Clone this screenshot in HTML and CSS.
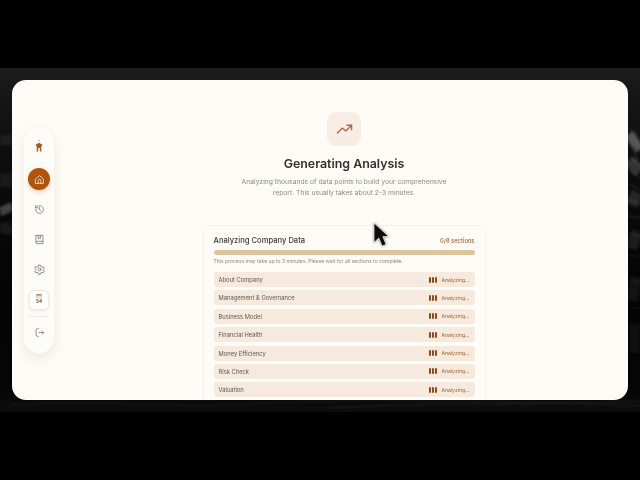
FILE: index.html
```html
<!DOCTYPE html>
<html lang="en">
<head>
<meta charset="utf-8">
<title>Generating Analysis</title>
<link rel="stylesheet" href="styles.css">
</head>
<body>
<div class="band">
  <svg class="texture" viewBox="0 0 640 344" preserveAspectRatio="none" aria-hidden="true">
    <defs>
      <filter id="soft"><feGaussianBlur stdDeviation="1"/></filter>
      <filter id="softer"><feGaussianBlur stdDeviation="1.800"/></filter>
    </defs>
    <g filter="url(#softer)" fill="none" stroke="#9a9a9a">
      <path d="M0 144 L12 138" stroke-width="8" opacity=".38"/>
      <path d="M0 72 L12 72" stroke-width="10" opacity=".1"/>
      <path d="M0 112 L12 112" stroke-width="14" opacity=".1"/>
      <path d="M0 160 L12 162" stroke-width="10" opacity=".12"/>
      <path d="M629 66 L640 82" stroke-width="9" opacity=".5"/>
      <path d="M629 92 L640 104" stroke-width="12" opacity=".28"/>
      <path d="M629 128 L640 134" stroke-width="14" opacity=".2"/>
      <path d="M629 170 L640 174" stroke-width="18" opacity=".14"/>
      <path d="M629 220 L640 222" stroke-width="24" opacity=".1"/>
      <path d="M629 270 L640 270" stroke-width="30" opacity=".07"/>
    </g>
    <g filter="url(#soft)" fill="none" stroke="#c4c4c4" stroke-width=".8" opacity=".3">
      <path d="M630 60 L639 78"/><path d="M634 62 L640 74"/><path d="M629 72 L638 92"/>
      <path d="M629 88 L640 98"/><path d="M629 102 L640 110"/><path d="M629 116 L640 122"/>
      <path d="M629 132 L640 136"/><path d="M629 148 L640 150"/><path d="M629 166 L640 168" opacity=".7"/>
      <path d="M629 188 L640 188" opacity=".6"/><path d="M629 212 L640 214" opacity=".5"/>
      <path d="M629 240 L640 240" opacity=".4"/><path d="M629 264 L640 266" opacity=".3"/>
      <path d="M0 140 L12 136"/><path d="M0 147 L12 143"/><path d="M2 156 L10 154" opacity=".6"/>
    </g>
    <g filter="url(#soft)" fill="none" stroke="#2e2e2e" stroke-width="1">
      <path d="M10 337 C100 332 170 340 250 336 S420 330 640 338" opacity=".5"/>
      <path d="M330 340 C420 334 520 338 640 333" opacity=".7"/>
    </g>
  </svg>
  <main class="window">
    <nav class="rail">
      <svg class="logo" viewBox="0 0 12 16" aria-hidden="true"><circle cx="6" cy="1.600" r="1" fill="#d9b79a"/><path d="M2 6.500 6 4l4 2.500-.8 2h-.7l.5 6H7v-4H5v4H3l.5-6h-.7z" fill="#a65a24"/></svg>
      <a class="rail-btn active">
        <svg viewBox="0 0 24 24"><path d="M3.500 11 12 3.500l8.500 7.500v9.500h-17z"/><path d="M9 20.500v-6a3 3 0 0 1 6 0v6"/></svg>
      </a>
      <a class="rail-btn">
        <svg viewBox="0 0 24 24"><path d="M3.500 12a8.500 8.500 0 1 0 2.800-6.300L3.500 8.500"/><path d="M3.500 3.500v5H8.500"/><path d="M12 7.500V12.500l3.500 2"/></svg>
      </a>
      <a class="rail-btn">
        <svg viewBox="0 0 24 24"><path d="M4.500 3h15v18H7a2.500 2.500 0 0 1-2.500-2.500z"/><path d="M4.500 18.500A2.500 2.500 0 0 1 7 16h12.500"/><path d="M9 3v7l2.500-1.500L14 10V3"/></svg>
      </a>
      <a class="rail-btn">
        <svg viewBox="0 0 24 24"><path d="M10 2.500h4l.7 3 2.700 1.500 2.900-.9 2 3.400-2.200 2.100v1.800l2.200 2.100-2 3.400-2.900-.9-2.700 1.500-.7 3h-4l-.7-3-2.700-1.500-2.900.9-2-3.400 2.200-2.100v-1.800L1.700 9.500l2-3.400 2.900.9L9.300 5.500z"/><circle cx="12" cy="12" r="3"/></svg>
      </a>
      <div class="credits">
        <svg viewBox="0 0 12 9" aria-hidden="true"><rect x=".5" y=".5" width="11" height="8" rx="1" fill="#f6e6d4" stroke="#c09066"/><rect x=".5" y=".5" width="11" height="3" fill="#b4794a"/></svg>
        <span>54</span>
      </div>
      <div class="rail-rule"></div>
      <a class="rail-btn">
        <svg viewBox="0 0 24 24"><path d="M9.500 3.500H8a3.500 3.500 0 0 0-3.500 3.500v10A3.500 3.500 0 0 0 8 20.500h1.500"/><path d="M11 12h10"/><path d="M17.500 8.500 21 12l-3.500 3.500"/></svg>
      </a>
    </nav>
    <section class="main">
      <div class="hero-icon">
        <svg viewBox="0 0 24 24"><path d="M2 17l7-7 5 4 8-8"/><path d="M15.500 6H22v6.500"/></svg>
      </div>
      <h1>Generating Analysis</h1>
      <p class="lead">Analyzing thousands of data points to build your comprehensive<br>report. This usually takes about 2-3 minutes.</p>
      <div class="card">
        <div class="card-head">
          <h2>Analyzing Company Data</h2>
          <span class="count">0/8 sections</span>
        </div>
        <div class="progress"></div>
        <p class="note">This process may take up to 3 minutes. Please wait for all sections to complete.</p>
        <ul class="list">
          <li><span>About Company</span><em><i class="bars"><b></b><b></b><b></b></i>Analyzing...</em></li>
          <li><span>Management &amp; Governance</span><em><i class="bars"><b></b><b></b><b></b></i>Analyzing...</em></li>
          <li><span>Business Model</span><em><i class="bars"><b></b><b></b><b></b></i>Analyzing...</em></li>
          <li><span>Financial Health</span><em><i class="bars"><b></b><b></b><b></b></i>Analyzing...</em></li>
          <li><span>Money Efficiency</span><em><i class="bars"><b></b><b></b><b></b></i>Analyzing...</em></li>
          <li><span>Risk Check</span><em><i class="bars"><b></b><b></b><b></b></i>Analyzing...</em></li>
          <li><span>Valuation</span><em><i class="bars"><b></b><b></b><b></b></i>Analyzing...</em></li>
        </ul>
      </div>
    </section>
  </main>
  <svg class="cursor" viewBox="0 0 16 26" aria-hidden="true"><path d="M1 1V20.500l4.800-4.400 3.300 8 4-1.700-3.300-7.800H15.800z" fill="#0b0b0b" stroke="#fff" stroke-width=".7"/></svg>
</div>
</body>
</html>
```
FILE: styles.css
```css
* { box-sizing: border-box; }
html, body { margin: 0; height: 100%; }
body {
  background: #000;
  padding-top: 68px;
  overflow: hidden;
  font-family: "Inter", "Liberation Sans", sans-serif;
}
.band {
  position: relative;
  height: 344px;
  padding: 12px;
  background:
    linear-gradient(180deg, #1c1c1c 0, #161616 30px, #0b0b0b 110px, #040404 220px, #050505 320px, #0c0c0c 340px);
}
.texture { position: absolute; inset: 0; width: 100%; height: 100%; }
.window {
  position: relative;
  height: 320px;
  display: flex;
  align-items: flex-start;
  padding: 46px 0 0 11px;
  background: #fffcf7;
  border-radius: 14px;
  overflow: hidden;
}
.rail {
  flex: none;
  width: 32px;
  height: 228px;
  margin-right: 5px;
  display: flex;
  flex-direction: column;
  align-items: center;
  padding-top: 12px;
  background: #fefcf9;
  border: 1px solid #f7f3ed;
  border-radius: 16px;
  box-shadow: 0 5px 12px rgba(90, 60, 30, .1);
}
.logo { width: 10px; height: 14px; margin-bottom: 15px; }
.rail-btn {
  width: 22px;
  height: 22px;
  margin-bottom: 8px;
  display: flex;
  align-items: center;
  justify-content: center;
  border-radius: 50%;
}
.rail-btn svg {
  width: 11px;
  height: 11px;
  fill: none;
  stroke: #77726d;
  stroke-width: 1.700;
  stroke-linecap: round;
  stroke-linejoin: round;
}
.rail-btn.active {
  background: #b0530f;
  box-shadow: 0 2px 5px rgba(176, 83, 15, .3);
}
.rail-btn.active svg { stroke: #fbeee0; }
.credits {
  width: 20px;
  height: 20px;
  margin-top: 2px;
  display: flex;
  flex-direction: column;
  align-items: center;
  padding-top: 3px;
  background: #fff;
  border: 1px solid #f3e8dc;
  border-radius: 5px;
  box-shadow: 0 1px 3px rgba(120, 80, 40, .15);
}
.credits svg { width: 6px; height: 4px; }
.credits span {
  margin-top: 1px;
  font-size: 4.500px;
  line-height: 6px;
  font-weight: 700;
  color: #5a5550;
}
.rail-rule {
  width: 20px;
  height: 1px;
  margin: 6px 0 4px;
  background: #efeae3;
}
.main {
  flex: 1;
  min-width: 0;
  display: flex;
  flex-direction: column;
  align-items: center;
  margin-top: -14px;
}
.hero-icon {
  width: 34px;
  height: 34px;
  display: flex;
  align-items: center;
  justify-content: center;
  background: #f8ece5;
  border-radius: 9px;
}
.hero-icon svg {
  width: 17px;
  height: 17px;
  fill: none;
  stroke: #b5683a;
  stroke-width: 1.900;
  stroke-linecap: round;
  stroke-linejoin: round;
}
h1 {
  margin: 10px 0 0;
  font-size: 12.400px;
  line-height: 16px;
  font-weight: 600;
  color: #33312f;
}
.lead {
  margin: 3.500px 0 0;
  font-size: 6.750px;
  line-height: 11px;
  text-align: center;
  color: #8d8a85;
}
.card {
  width: 283px;
  height: 200px;
  margin-top: 27.500px;
  padding: 8px 10px 0;
  background: #fffcf7;
  border: 1px solid #f6f0e8;
  border-radius: 8px;
}
.card-head {
  display: flex;
  justify-content: space-between;
  align-items: center;
  height: 13px;
}
h2 {
  margin: 0;
  font-size: 7.600px;
  font-weight: 500;
  color: #3a3734;
}
.count {
  font-size: 5.800px;
  font-weight: 500;
  color: #a8622e;
}
.progress {
  height: 5px;
  margin-top: 3px;
  background: #e0c49b;
  border-radius: 3px;
}
.note {
  margin: 2px 0 0;
  font-size: 5.050px;
  line-height: 8px;
  color: #8d8a85;
}
.list {
  list-style: none;
  margin: 7px 0 0;
  padding: 0;
  display: flex;
  flex-direction: column;
  gap: 3.400px;
}
.list li {
  flex: none;
  height: 15px;
  padding: 0 5px;
  display: flex;
  justify-content: space-between;
  align-items: center;
  background: #f6eadf;
  border-radius: 3px;
  font-size: 5.800px;
  color: #5e564e;
}
.list em {
  display: flex;
  align-items: center;
  gap: 4px;
  font-style: normal;
  font-size: 5.100px;
  color: #a8622e;
}
.bars { display: flex; gap: 1px; align-items: center; }
.bars b {
  width: 2px;
  height: 6px;
  background: #8f4a1c;
  border-radius: 1px;
}
.cursor {
  position: absolute;
  left: 373px;
  top: 154px;
  width: 16px;
  height: 26px;
  filter: drop-shadow(0 0 1px rgba(0, 0, 0, .5));
}
```
